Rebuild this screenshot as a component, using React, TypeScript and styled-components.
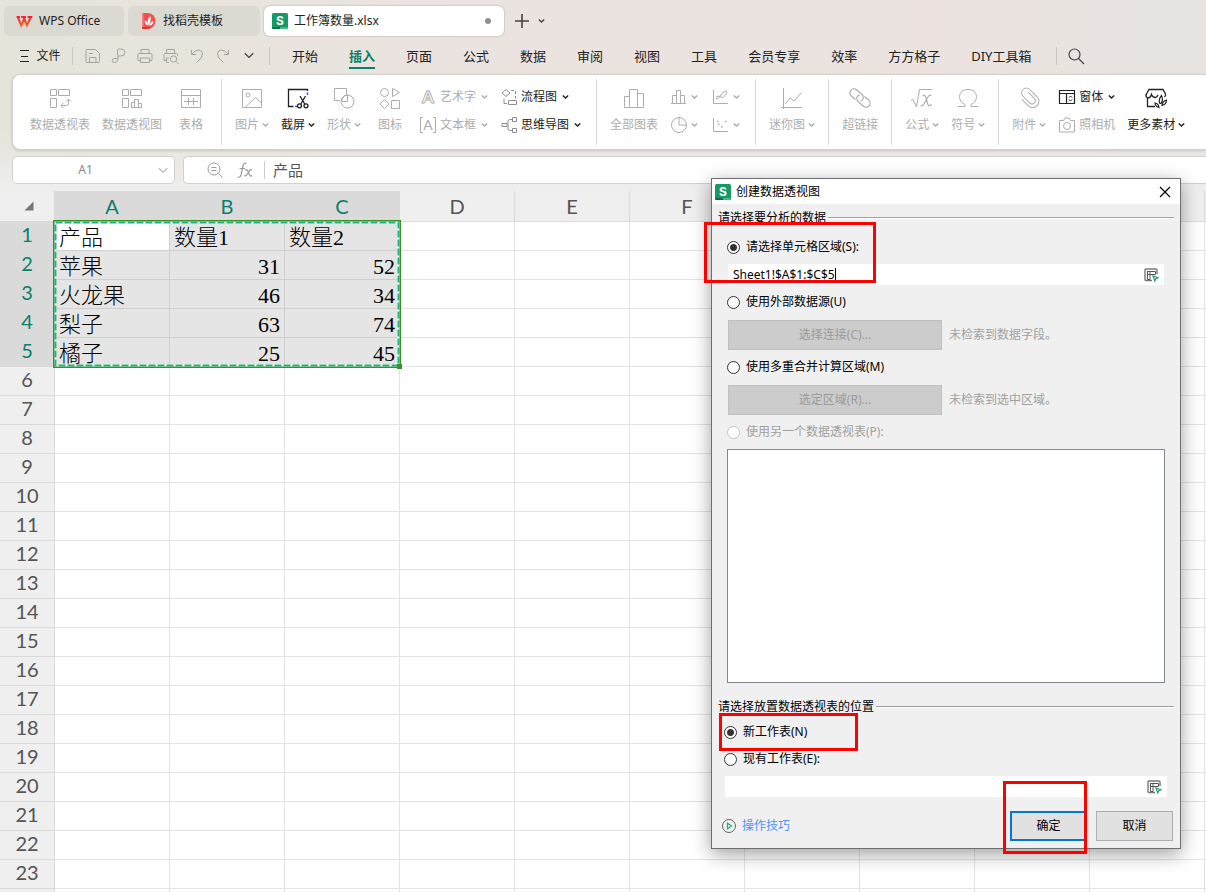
import React from "react";
import styled, { createGlobalStyle, css } from "styled-components";

const uiFont = `"Noto Sans", "Noto Sans CJK SC", sans-serif`;
const green = "#0a7f6c";

const GlobalStyle = createGlobalStyle`
  *, *::before, *::after { box-sizing: border-box; }
  body { margin: 0; font: 12px/18px ${uiFont}; color: #222; }
  button, input { font: inherit; color: inherit; margin: 0; }
  svg { display: block; flex: none; }
`;

/* ---------- page ---------- */

const Page = styled.div`
  position: relative;
  display: flex;
  flex-direction: column;
  height: 100vh;
  min-height: 600px;
  overflow: hidden;
  background: linear-gradient(180deg, rgba(238, 238, 238, 0) 130px, #eeeeee 190px),
    linear-gradient(90deg, #e4e4da 0%, #e8e4dc 18%, #ebe3e0 38%, #ece3e1 78%, #e6e3e0 100%);
`;

const PlainButton = styled.button`
  display: flex;
  align-items: center;
  justify-content: center;
  padding: 0;
  border: 0;
  background: none;
  white-space: nowrap;
`;

/* ---------- document tabs ---------- */

const TabBar = styled.header`
  display: flex;
  align-items: center;
  gap: 4px;
  flex: none;
  padding: 6px 4px 0;
`;

const Tab = styled(PlainButton)<{ $width: number; $active?: boolean }>`
  justify-content: flex-start;
  gap: 6px;
  width: ${(p) => p.$width}px;
  height: 30px;
  padding: 0 12px;
  border-radius: 6px;
  background: #dad9d2;
  ${(p) =>
    p.$active &&
    css`
      padding: 0 13px 0 8px;
      background: #fff;
      box-shadow: 0 0 2px rgba(0, 0, 0, 0.35);
    `}
`;

const UnsavedDot = styled.span`
  width: 6px;
  height: 6px;
  margin-left: auto;
  border-radius: 50%;
  background: #8f8f8f;
`;

const NewTab = styled.div`
  display: flex;
  align-items: center;
  gap: 8px;
  margin-left: 6px;
  color: #444;
`;

/* ---------- menu row ---------- */

const MenuBar = styled.nav`
  display: flex;
  align-items: center;
  flex: none;
  height: 38px;
  padding: 1px 0 0 17px;
`;

const FileButton = styled(PlainButton)`
  gap: 5px;
  width: 44px;
`;

const Divider = styled.span<{ $before: number; $after: number }>`
  width: 1px;
  height: 18px;
  margin: 0 ${(p) => p.$after}px 0 ${(p) => p.$before}px;
  background: #c9c6c2;
`;

const QuickTools = styled.div`
  display: flex;
  gap: 8px;
`;

const QuickTool = styled(PlainButton)<{ $dark?: boolean }>`
  width: 18px;
  height: 18px;
  color: ${(p) => (p.$dark ? "#444" : "#a5a39f")};
`;

const MenuItems = styled.div`
  display: flex;
  gap: 31px;
`;

const MenuItem = styled(PlainButton)<{ $active?: boolean }>`
  height: 26px;
  font-size: 13px;
  border-bottom: 2px solid transparent;
  border-top: 2px solid transparent;
  ${(p) =>
    p.$active &&
    css`
      color: ${green};
      font-weight: 700;
      border-bottom-color: ${green};
    `}
`;

/* ---------- ribbon ---------- */

const Ribbon = styled.section`
  display: flex;
  flex: none;
  height: 76px;
  margin-left: 12px;
  padding: 4px 0 4px 4px;
  border: 1px solid #d3d0cc;
  border-right: 0;
  border-radius: 8px 0 0 8px;
  background: #fff;
  box-shadow: 0 1px 3px rgba(0, 0, 0, 0.15);
`;

const Group = styled.div`
  display: flex;
  gap: 12px;
  padding: 0 13px;
  & + & {
    border-left: 1px solid #d8d8d8;
  }
`;

const tone = css<{ $on?: boolean }>`
  color: ${(p) => (p.$on ? "#222" : "#adadad")};
`;

const BigTool = styled(PlainButton)<{ $on?: boolean }>`
  flex-direction: column;
  justify-content: flex-start;
  gap: 6px;
  min-width: 34px;
  padding-top: 7px;
  ${tone}
`;

const Caption = styled.span`
  display: flex;
  align-items: center;
  gap: 3px;
`;

const SmallColumn = styled.div<{ $min?: number }>`
  display: flex;
  flex-direction: column;
  gap: 10px;
  padding-top: 9px;
  min-width: ${(p) => p.$min ?? 0}px;
`;

const SmallTool = styled(PlainButton)<{ $on?: boolean }>`
  justify-content: flex-start;
  gap: 3px;
  height: 18px;
  ${tone}
`;

const SmallCaption = styled(Caption)`
  gap: 5px;
`;

/* ---------- formula row ---------- */

const FormulaRow = styled.div`
  display: flex;
  gap: 8px;
  flex: none;
  padding: 6px 0 7px 12px;
`;

const barBox = css`
  display: flex;
  align-items: center;
  height: 28px;
  border: 1px solid #d3d0cc;
  background: #fff;
`;

const NameBox = styled.div`
  ${barBox}
  width: 163px;
  padding-right: 6px;
  border-radius: 5px;
  color: #bbb;
`;

const NameInput = styled.input`
  flex: 1;
  min-width: 0;
  border: 0;
  outline: 0;
  padding: 0;
  background: none;
  text-align: center;
  color: #888;
`;

const FormulaBox = styled.div`
  ${barBox}
  flex: 1;
  gap: 10px;
  padding-left: 22px;
  border-right: 0;
  border-radius: 5px 0 0 5px;
  color: #999;
`;

const FormulaInput = styled.input`
  flex: 1;
  min-width: 0;
  padding: 0 0 0 8px;
  border: 0;
  border-left: 1px solid #ccc;
  outline: 0;
  height: 18px;
  font-size: 15px;
  color: #555;
`;

/* ---------- grid ---------- */

const Sheet = styled.main`
  position: relative;
  flex: 1;
  min-height: 0;
  overflow: hidden;
  background: #fff;
`;

const Grid = styled.table`
  table-layout: fixed;
  width: 1435px;
  border-collapse: separate;
  border-spacing: 0;
`;

const HeadCol = styled.col`
  width: 55px;
`;

const DataCol = styled.col`
  width: 115px;
`;

const headCell = css<{ $sel?: boolean }>`
  border-right: 1px solid #d9d9d9;
  border-bottom: 1px solid #d9d9d9;
  background: ${(p) => (p.$sel ? "#dadada" : "#efefef")};
  color: ${(p) => (p.$sel ? green : "#555")};
  font: 400 20px/24px Lato, sans-serif;
  text-align: center;
`;

const ColumnHead = styled.th<{ $sel?: boolean }>`
  ${headCell}
  height: 31px;
  padding: 0;
  ${(p) => p.$sel && "border-right-color: #dadada;"}
`;

const RowHead = styled.th<{ $sel?: boolean }>`
  ${headCell}
  height: 29px;
  padding: 0 0 4px;
  ${(p) => p.$sel && "border-bottom-color: #dadada;"}
`;

const Corner = styled(ColumnHead)`
  padding-left: 24px;
  color: #777;
`;

const Cell = styled.td<{ $sel?: boolean; $current?: boolean; $number?: boolean }>`
  height: 29px;
  padding: 4px 4px 0;
  border-right: 1px solid ${(p) => (p.$sel ? "#cfcfcf" : "#e3e3e3")};
  border-bottom: 1px solid ${(p) => (p.$sel ? "#cfcfcf" : "#e3e3e3")};
  background: ${(p) => (p.$sel && !p.$current ? "#e5e5e5" : "#fff")};
  font: 300 22px/24px "Liberation Serif", "Noto Sans CJK SC", serif;
  color: #000;
  text-align: ${(p) => (p.$number ? "right" : "left")};
  white-space: nowrap;
`;

/* Marquee that lies over the selected cells */
const Marquee = styled.svg`
  position: absolute;
  left: 53px;
  top: 29px;
`;

/* ---------- dialog ---------- */

const Dialog = styled.div`
  position: absolute;
  left: 711px;
  top: 178px;
  width: 470px;
  border: 1px solid #6e6e6e;
  background: #f0f0f0;
  box-shadow: 0 5px 18px rgba(0, 0, 0, 0.38);
  color: #000;
`;

const TitleBar = styled.div`
  display: flex;
  align-items: center;
  gap: 5px;
  height: 25px;
  padding: 0 9px 0 3px;
  background: #fff;
`;

const CloseButton = styled(PlainButton)`
  margin-left: auto;
`;

const Legend = styled.div<{ $top: number }>`
  display: flex;
  align-items: center;
  gap: 2px;
  margin: ${(p) => p.$top}px 6px 0;
  &::after {
    content: "";
    flex: 1;
    height: 2px;
    border-top: 1px solid #a0a0a0;
    background: #fff;
  }
`;

const Options = styled.div<{ $pad: string }>`
  display: flex;
  flex-direction: column;
  gap: 7px;
  padding: ${(p) => p.$pad};
`;

const RadioLabel = styled.label<{ $off?: boolean }>`
  display: flex;
  align-items: center;
  gap: 6px;
  height: 20px;
  color: ${(p) => (p.$off ? "#a0a0a0" : "#000")};
`;

const Radio = styled.input`
  appearance: none;
  width: 13px;
  height: 13px;
  border: 1px solid #333;
  border-radius: 50%;
  background: #fff;
  &:checked {
    background: radial-gradient(circle, #333 0 3px, #fff 4px);
  }
  &:disabled {
    border-color: #c4c4c4;
  }
`;

const RangeField = styled.div`
  display: flex;
  align-items: center;
  height: 21px;
  margin: 0 1px;
  padding: 0 5px;
  background: #fff;
`;

const RangeInput = styled.input`
  field-sizing: content;
  padding: 0;
  border: 0;
  outline: 0;
  background: none;
`;

const Caret = styled.span`
  width: 1px;
  height: 14px;
  background: #000;
`;

const PickButton = styled(PlainButton)`
  margin-left: auto;
`;

const ChoiceRow = styled.div`
  display: flex;
  align-items: center;
  gap: 7px;
  margin-left: 1px;
  padding-top: 1px;
  color: #a0a0a0;
`;

const SourceButton = styled(PlainButton)`
  width: 214px;
  height: 30px;
  border: 1px solid #bfbfbf;
  background: #ccc;
  color: #9a9a9a;
`;

const PivotList = styled.div`
  height: 234px;
  border: 1px solid #828790;
  background: #fff;
`;

const DialogFooter = styled.div`
  display: flex;
  align-items: center;
  gap: 9px;
  padding: 14px 7px 7px 9px;
`;

const TipLink = styled.a`
  display: flex;
  align-items: center;
  gap: 5px;
  margin-right: auto;
  color: #4d94ff;
  text-decoration: none;
`;

const DialogButton = styled(PlainButton)<{ $primary?: boolean }>`
  width: 77px;
  height: 30px;
  border: ${(p) => (p.$primary ? "2px solid #0078d7" : "1px solid #adadad")};
  background: #e1e1e1;
`;

/* Red frame drawn over the dialog to point at a step */
const Highlight = styled.span<{ $x: number; $y: number; $w: number; $h: number }>`
  position: absolute;
  left: ${(p) => p.$x}px;
  top: ${(p) => p.$y}px;
  width: ${(p) => p.$w}px;
  height: ${(p) => p.$h}px;
  border: 3px solid #fe0000;
  pointer-events: none;
`;

/* ---------- icons ---------- */

const Icon = ({ size = 24, children }: { size?: number; children: React.ReactNode }) => (
  <svg width={size} height={size} viewBox={`0 0 ${size} ${size}`} fill="none" stroke="currentColor" aria-hidden="true">
    {children}
  </svg>
);

const Chevron = () => (
  <svg width="7" height="6" viewBox="0 0 7 6" fill="none" stroke="currentColor" strokeWidth="1.5" aria-hidden="true">
    <path d="M0.8 1.5 3.5 4 6.2 1.5" />
  </svg>
);

const WideChevron = () => (
  <svg width="10" height="7" viewBox="0 0 10 7" fill="none" stroke="currentColor" strokeWidth="1.3" aria-hidden="true">
    <path d="M0.8 1.2 5 5.4 9.2 1.2" />
  </svg>
);

const SheetLogo = () => (
  <svg width="16" height="16" viewBox="0 0 16 16" aria-hidden="true">
    <rect width="16" height="16" rx="1.5" fill="#139a66" />
    <path d="M0 14h8v2H1.5A1.5 1.5 0 0 1 0 14.5z" fill="#0b6b47" />
    <path d="M8 14h8v.5a1.5 1.5 0 0 1-1.5 1.5H8z" fill="#3db986" />
    <text x="8" y="11.5" textAnchor="middle" fontFamily="Inter, sans-serif" fontWeight="700" fontSize="12" fill="#fff">
      S
    </text>
  </svg>
);

const WpsLogo = () => (
  <svg width="17" height="13" viewBox="0 0 17 13" fill="none" stroke="url(#wps)" strokeWidth="2" aria-hidden="true">
    <defs>
      <linearGradient id="wps" gradientUnits="userSpaceOnUse" x1="0" y1="0" x2="0" y2="13">
        <stop offset="0.2" stopColor="#f5222d" />
        <stop offset="1" stopColor="#ff7a1a" />
      </linearGradient>
    </defs>
    <path d="M0.6 2H4M1.6 1.6 5.2 10.4 8.2 4M5.2 2H10M7.4 1.6 11 10.4 15 1.6M11.6 2H16.4" />
  </svg>
);

const DocerLogo = () => (
  <svg width="17" height="16" viewBox="0 0 17 16" aria-hidden="true">
    <path d="M2 0h5.5a8 8 0 0 1 0 16H2z" fill="#f2504f" />
    <path d="M2 0h1.5v16H2z" fill="#f98380" />
    <path d="M2 14h9q-1.500 2-4 2H2z" fill="#d93a38" />
    <path d="M8.500 12C7 10 7.500 5 10.500 3 11 6 10.500 10 8.500 12zM8 12.500C5.500 12 4.500 10 4.700 7.500 7 8.500 8 10 8 12.500zM9 12.500C10 10 11.500 8.500 13.500 8 13.500 10.500 12 12.500 9 12.500z" fill="#fff" />
  </svg>
);

const pivotFrame = "M2.5 3.5h6v6h-6zM10.5 3.5h11v6h-11zM2.5 12.5h6v9h-6z";

const icons = {
  pivotTable: <path d={`${pivotFrame}M20.5 13v4.5q0 2-2 2h-5.5M18 15.5l2.500-2.500 2.500 2.500M15.500 17 13 19.500l2.500 2.500`} />,
  pivotChart: <path d={`${pivotFrame}M11.5 21.5v-5h3v5M14.5 21.5v-8h4v8M18.5 17.5h3v4M11 21.5h11`} />,
  table: <path d="M2.5 3.5h19v18h-19zM2.5 9.5h19M5 15.500h14M9.500 12v7M14.500 12v7" />,
  picture: (
    <>
      <path d="M2.500 3.500h19v18h-19zM5.500 21 15.500 11.500 21.500 17" />
      <circle cx="8" cy="9" r="2" />
    </>
  ),
  capture: (
    <>
      <path d="M21.500 5V3.500h-19v17h5" strokeWidth="1.300" />
      <path d="M21.500 6.500v2.500M9 20.500h2" stroke="#3050ff" strokeWidth="1.500" />
      <path d="M19.500 10 14.500 18.500M14 10l5 8.500" strokeWidth="1.300" />
      <circle cx="13.500" cy="19.800" r="2" strokeWidth="1.300" />
      <circle cx="20" cy="19.800" r="2" strokeWidth="1.300" />
    </>
  ),
  shapes: (
    <>
      <path d="M8 14.500H2.500v-12h12v6" />
      <path d="M10 15.500q0-6 5.500-6.500v6.500z" />
      <circle cx="15.500" cy="15.500" r="6.500" />
    </>
  ),
  iconSet: (
    <>
      <circle cx="6.500" cy="6.500" r="4" />
      <path d="M14.500 2.500 21.500 6.500l-7 4zM6.500 13.500l4.500 4.500-4.500 4.500L2 18zM13.500 14.500h8v8h-8z" />
    </>
  ),
  allCharts: <path d="M2.500 20.500v-10h5M7.500 20.500v-17h8v17M15.500 7.500h6v13M2 21.500h20" />,
  sparkline: <path d="M3.500 2v21M1 21.500h21M5 18l5-6 4 3 7.500-8.500" />,
  link: (
    <g transform="rotate(40 12 12)" strokeWidth="1.200">
      <path d="M9.500 16H4a4 4 0 0 1 0-8h7a4 4 0 0 1 3.500 6" />
      <path d="M14.500 8H20a4 4 0 0 1 0 8h-7a4 4 0 0 1-3.500-6" />
    </g>
  ),
  formula: (
    <>
      <path d="M1 14.500l2-1 3.500 7.500L9.500 3.500h13" />
      <path d="M12.500 10q2.500-2 3.500 2l1.500 5.500q1 4 4 1M21.500 9.500q-2-1-3.500 1.500l-4 7q-1.500 2.500-3.500 1.500" strokeWidth="1.200" />
    </>
  ),
  omega: <path d="M2 20.500h7v-2Q3.500 16 3.500 10.500 4 3.500 12 3.500t8.500 7Q20.500 16 15 18.500v2h7" />,
  clip: (
    <g transform="rotate(-45 12 12)">
      <path d="M15.500 7v9a3 3 0 0 1-6.500 0V6.500a4.500 4.500 0 0 1 9.500 0V17a6 6 0 0 1-12.500 0V8" />
    </g>
  ),
  material: (
    <>
      <path d="M11 20.500H3.500V12Q1 10 2.500 8L5 3.500h14L21.500 8q.5 2-1 3M3.500 12q3 0 4-3.500 1 3 4 3 1.500 0 2.500-2.500" strokeWidth="1.300" />
      <path d="M15.500 17q-1-4 2-7.500 2 4-.5 8zM18 19.500q.5-4.500 4.500-5.500 0 4.500-4.500 5.500zM15 21.500q-3.500-.5-4-4.500 3.500.5 4 4.500z" strokeWidth="1.200" />
    </>
  ),
};

const small = {
  artText: (
    <text x="9" y="15" textAnchor="middle" fontFamily="Lato, sans-serif" fontWeight="900" fontSize="17" strokeWidth="0.900">
      A
    </text>
  ),
  textBox: (
    <>
      <path d="M1.500 5V1.500H4M14 1.500h2.500V5M16.500 13v3.500H14M4 16.500H1.500V13M1.500 5v8M16.500 5v8" />
      <text x="9" y="14" textAnchor="middle" fontFamily="Lato, sans-serif" fontSize="14" stroke="none" fill="currentColor">
        A
      </text>
    </>
  ),
  flow: (
    <g stroke="#8f8f8f">
      <path d="M2 5l4-3.500L10 5 6 8.500zM4 10.500v5h3M8.500 12.500h8v4h-8z" />
      <path d="M11 2.500h4.500v8" strokeDasharray="3 2" />
    </g>
  ),
  mind: (
    <g stroke="#8f8f8f">
      <path d="M2 7.500h5v3H2zM12.500 1.500h4v4h-4zM12.500 12.500h4v4h-4z" />
      <path d="M12 3.500h-2q-2 0-2 2v7q0 2 2 2h2" />
    </g>
  ),
  column: <path d="M2.500 15.500v-8h4M6.500 15.500v-13h4v13M10.500 7.500h4v8M1 15.500h15" />,
  pie: (
    <>
      <circle cx="9" cy="9" r="7.500" />
      <path d="M9 1.500V9h7.500" />
    </>
  ),
  line: <path d="M1.500 2v13.500H16M4 11q3 0 5-4t6-4M4 9q3-2 5 0 3 2 6-5" />,
  scatter: (
    <>
      <path d="M1.500 2v13.500H16" />
      <path d="M5 5.500h1.500M9 11h1.500M13 5.500h1.500M6 8.500h1.500" strokeWidth="1.500" />
    </>
  ),
  form: (
    <>
      <path d="M1.500 2.500h15v13h-15zM1.500 5.500h15M8.500 5.500v10" strokeWidth="1.200" />
      <path d="M11 9.500l1.500-1.500L14 9.500M11 11.500l1.500 1.500 1.500-1.500" />
    </>
  ),
  camera: (
    <>
      <path d="M1.500 4.500h4l1.500-2.500h4l1.500 2.500h4v11.500h-15z" />
      <circle cx="9" cy="10" r="3.500" />
    </>
  ),
};

const RangePicker = () => (
  <Icon size={16}>
    <path d="M9 13.500H3q-1 0-1-1V3q0-1 1-1h10q1 0 1 1v4" stroke="#777" strokeWidth="1.400" />
    <path d="M4 4.500h8.500v3H7v5H4.500v-8M4.500 7.500H7v-3" stroke="#555" />
    <path d="M10 9l5 1.800-2.200 1L11.800 14z" fill="#fff" stroke="#1c9a69" strokeWidth="1.200" />
  </Icon>
);

const quickTools: { name: string; art: React.ReactNode }[] = [
  { name: "保存", art: <path d="M10 2.500H3q-1 0-1 1v11q0 1 1 1h11.500q1 0 1-1V6.500L11.500 2.500zM5.500 15v-4.500h6.500V15M5 6.500h4" /> },
  { name: "输出为PDF", art: <path d="M7.500 8.500V3q0-1 1-1h2.500q4 0 4 3.500T11 9H8M8 9v3q0 3-3 3.500-3 0-3-2T5 11.500h3" /> },
  { name: "打印", art: <path d="M5 6V2.500h8V6M4.500 13.500H2v-6q0-1 1-1h12q1 0 1 1v6h-2.500M4.500 11h9v4.500h-9z" /> },
  {
    name: "打印预览",
    art: (
      <>
        <path d="M4.500 6V2.500h8V6M4.500 13.500H2v-6q0-1 1-1h11.500q1 0 1 1V9M4.500 15V11H7M4.500 15.500H7" />
        <circle cx="11.500" cy="12" r="3.200" />
        <path d="M14 14.500l2.500 2.500" />
      </>
    ),
  },
  { name: "撤销", art: <path d="M3.500 3v4.500H8M4 7q3-4 7-4 3.500.5 3.500 4 0 4-6 8.500" /> },
  { name: "恢复", art: <path d="M14.500 3v4.500H10M14 7q-3-4-7-4-3.500.5-3.500 4 0 4 6 8.500" /> },
];

/* ---------- content ---------- */

const menu = ["开始", "插入", "页面", "公式", "数据", "审阅", "视图", "工具", "会员专享", "效率", "方方格子", "DIY工具箱"];
const columns = ["A", "B", "C", "D", "E", "F", "G", "H", "I", "J", "K", "L"];
const records: (string | number)[][] = [
  ["产品", "数量1", "数量2"],
  ["苹果", 31, 52],
  ["火龙果", 46, 34],
  ["梨子", 63, 74],
  ["橘子", 25, 45],
];
const rowNumbers = Array.from({ length: 24 }, (_, i) => i + 1);

const Big = ({ icon, label, on, more }: { icon: keyof typeof icons; label: string; on?: boolean; more?: boolean }) => (
  <BigTool type="button" $on={on}>
    <Icon>{icons[icon]}</Icon>
    <Caption>
      {label}
      {more && <Chevron />}
    </Caption>
  </BigTool>
);

const Small = ({ icon, label, on, more }: { icon: keyof typeof small; label?: string; on?: boolean; more?: boolean }) => (
  <SmallTool type="button" $on={on} aria-label={label ?? icon}>
    <Icon size={18}>{small[icon]}</Icon>
    <SmallCaption>
      {label}
      {more && <Chevron />}
    </SmallCaption>
  </SmallTool>
);

const Option = ({ name, label, checked, off }: { name: string; label: string; checked?: boolean; off?: boolean }) => (
  <RadioLabel $off={off}>
    <Radio type="radio" name={name} defaultChecked={checked} disabled={off} />
    {label}
  </RadioLabel>
);

const PivotDialog = () => (
  <Dialog role="dialog" aria-labelledby="pivot-title">
    <TitleBar>
      <SheetLogo />
      <span id="pivot-title">创建数据透视图</span>
      <CloseButton type="button" aria-label="关闭">
        <Icon size={12}>
          <path d="M1 1l10 10M11 1 1 11" stroke="#000" strokeWidth="1.200" />
        </Icon>
      </CloseButton>
    </TitleBar>
    <Legend $top={5}>请选择要分析的数据</Legend>
    <Options $pad="10px 15px 0">
      <Option name="source" label="请选择单元格区域(S):" checked />
      <RangeField>
        <RangeInput aria-label="单元格区域" defaultValue="Sheet1!$A$1:$C$5" />
        <Caret />
        <PickButton type="button" aria-label="选取区域">
          <RangePicker />
        </PickButton>
      </RangeField>
      <Option name="source" label="使用外部数据源(U)" />
      <ChoiceRow>
        <SourceButton type="button" disabled>
          选择连接(C)...
        </SourceButton>
        未检索到数据字段。
      </ChoiceRow>
      <Option name="source" label="使用多重合并计算区域(M)" />
      <ChoiceRow>
        <SourceButton type="button" disabled>
          选定区域(R)...
        </SourceButton>
        未检索到选中区域。
      </ChoiceRow>
      <Option name="source" label="使用另一个数据透视表(P):" off />
      <PivotList />
    </Options>
    <Legend $top={15}>请选择放置数据透视表的位置</Legend>
    <Options $pad="6px 12px 0">
      <Option name="target" label="新工作表(N)" checked />
      <Option name="target" label="现有工作表(E):" />
      <RangeField>
        <RangeInput aria-label="现有工作表位置" />
        <PickButton type="button" aria-label="选取位置">
          <RangePicker />
        </PickButton>
      </RangeField>
    </Options>
    <DialogFooter>
      <TipLink href="#tips">
        <Icon size={16}>
          <circle cx="8" cy="8" r="6.500" stroke="#666" />
          <path d="M6.500 5.200v5.600L10.500 8z" stroke="#22b07d" strokeWidth="1.200" />
        </Icon>
        操作技巧
      </TipLink>
      <DialogButton type="button" $primary>
        确定
      </DialogButton>
      <DialogButton type="button">取消</DialogButton>
    </DialogFooter>
    <Highlight $x={-8} $y={43} $w={172} $h={61} />
    <Highlight $x={7} $y={534} $w={139} $h={38} />
    <Highlight $x={291} $y={602} $w={84} $h={73} />
  </Dialog>
);

export default function App() {
  return (
    <Page>
      <GlobalStyle />
      <TabBar>
        <Tab type="button" $width={120}>
          <WpsLogo />
          WPS Office
        </Tab>
        <Tab type="button" $width={132}>
          <DocerLogo />
          找稻壳模板
        </Tab>
        <Tab type="button" $width={240} $active>
          <SheetLogo />
          工作簿数量.xlsx
          <UnsavedDot />
        </Tab>
        <NewTab>
          <PlainButton type="button" aria-label="新建">
            <Icon size={16}>
              <path d="M8 1v14M1 8h14" strokeWidth="1.600" />
            </Icon>
          </PlainButton>
          <PlainButton type="button" aria-label="更多">
            <Chevron />
          </PlainButton>
        </NewTab>
      </TabBar>

      <MenuBar>
        <FileButton type="button">
          <Icon size={14}>
            <path d="M3 1.500h9M4 7.500h7M3 12.500h9" strokeWidth="1.200" />
          </Icon>
          文件
        </FileButton>
        <Divider $before={11} $after={11} />
        <QuickTools>
          {quickTools.map((t) => (
            <QuickTool key={t.name} type="button" aria-label={t.name}>
              <Icon size={18}>{t.art}</Icon>
            </QuickTool>
          ))}
          <QuickTool type="button" aria-label="自定义" $dark>
            <WideChevron />
          </QuickTool>
        </QuickTools>
        <Divider $before={11} $after={22} />
        <MenuItems>
          {menu.map((m) => (
            <MenuItem key={m} type="button" $active={m === "插入"}>
              {m}
            </MenuItem>
          ))}
        </MenuItems>
        <Divider $before={25} $after={10} />
        <QuickTool type="button" aria-label="搜索" $dark>
          <Icon size={18}>
            <circle cx="7.500" cy="7.500" r="5.500" strokeWidth="1.200" />
            <path d="M11.500 11.500 17 17" strokeWidth="1.200" />
          </Icon>
        </QuickTool>
      </MenuBar>

      <Ribbon>
        <Group>
          <Big icon="pivotTable" label="数据透视表" />
          <Big icon="pivotChart" label="数据透视图" />
          <Big icon="table" label="表格" />
        </Group>
        <Group>
          <Big icon="picture" label="图片" more />
          <Big icon="capture" label="截屏" on more />
          <Big icon="shapes" label="形状" more />
          <Big icon="iconSet" label="图标" />
          <SmallColumn>
            <Small icon="artText" label="艺术字" more />
            <Small icon="textBox" label="文本框" more />
          </SmallColumn>
          <SmallColumn $min={83}>
            <Small icon="flow" label="流程图" on more />
            <Small icon="mind" label="思维导图" on more />
          </SmallColumn>
        </Group>
        <Group>
          <Big icon="allCharts" label="全部图表" />
          <SmallColumn $min={30}>
            <Small icon="column" more />
            <Small icon="pie" more />
          </SmallColumn>
          <SmallColumn $min={30}>
            <Small icon="line" more />
            <Small icon="scatter" more />
          </SmallColumn>
        </Group>
        <Group>
          <Big icon="sparkline" label="迷你图" more />
        </Group>
        <Group>
          <Big icon="link" label="超链接" />
        </Group>
        <Group>
          <Big icon="formula" label="公式" more />
          <Big icon="omega" label="符号" more />
        </Group>
        <Group>
          <Big icon="clip" label="附件" more />
          <SmallColumn>
            <Small icon="form" label="窗体" on more />
            <Small icon="camera" label="照相机" />
          </SmallColumn>
          <Big icon="material" label="更多素材" on more />
        </Group>
      </Ribbon>

      <FormulaRow>
        <NameBox>
          <NameInput aria-label="名称框" defaultValue="A1" />
          <WideChevron />
        </NameBox>
        <FormulaBox>
          <Icon size={18}>
            <circle cx="8" cy="8" r="6" />
            <path d="M12.500 12.500 16.500 16.500M5.500 6.500h5M5.500 9.500h5" />
          </Icon>
          <Icon size={20}>
            <path d="M12.500 3.500Q10 2 9 6L7 15q-1 3-3.500 2M5.500 8.500h5.500M11 10q2-1 3 1.500l1.500 3.500q1 2 2.500.5M18 10q-2-1-3 1.500l-2 3q-1 2-3 1" strokeWidth="1.200" />
          </Icon>
          <FormulaInput aria-label="编辑栏" defaultValue="产品" />
        </FormulaBox>
      </FormulaRow>

      <Sheet>
        <Grid>
          <colgroup>
            <HeadCol />
            {columns.map((c) => (
              <DataCol key={c} />
            ))}
          </colgroup>
          <thead>
            <tr>
              <Corner>
                <Icon size={10}>
                  <path d="M9.500 0.500v9H0.500z" fill="currentColor" stroke="none" />
                </Icon>
              </Corner>
              {columns.map((c, i) => (
                <ColumnHead key={c} scope="col" $sel={i < 3}>
                  {c}
                </ColumnHead>
              ))}
            </tr>
          </thead>
          <tbody>
            {rowNumbers.map((n, r) => (
              <tr key={n}>
                <RowHead scope="row" $sel={r < 5}>
                  {n}
                </RowHead>
                {columns.map((c, i) => {
                  const value = records[r]?.[i];
                  return (
                    <Cell
                      key={c}
                      $sel={r < 5 && i < 3}
                      $current={r === 0 && i === 0}
                      $number={typeof value === "number"}
                    >
                      {value}
                    </Cell>
                  );
                })}
              </tr>
            ))}
          </tbody>
        </Grid>
        <Marquee width="350" height="150" viewBox="0 0 350 150" fill="none" aria-hidden="true">
          <rect x="1" y="1" width="346" height="146" stroke="#3f8f20" strokeWidth="2" />
          <rect x="2.500" y="2.500" width="343" height="143" stroke="#fff" strokeWidth="2" />
          <rect x="2.500" y="2.500" width="343" height="143" stroke="#1db57f" strokeWidth="2" strokeDasharray="7 2" />
          <path d="M344 144h5v5h-5z" fill="#3f8f20" />
        </Marquee>
      </Sheet>

      <PivotDialog />
    </Page>
  );
}
